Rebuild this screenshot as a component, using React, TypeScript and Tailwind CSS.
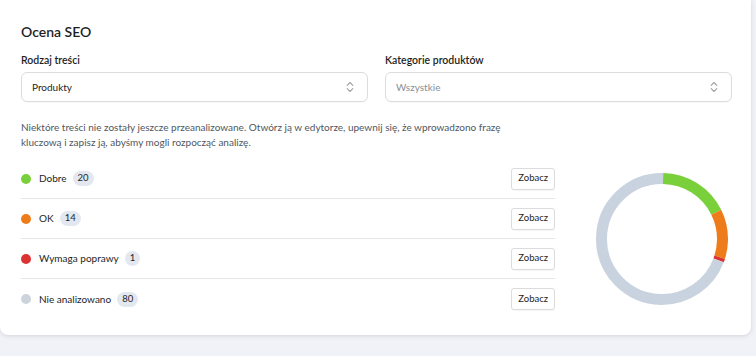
import React from 'react';

const rows = [
  { label: 'Dobre', count: 20, dot: 'bg-[#7ad03a]' },
  { label: 'OK', count: 14, dot: 'bg-[#ee7c1b]' },
  { label: 'Wymaga poprawy', count: 1, dot: 'bg-[#dc3232]' },
  { label: 'Nie analizowano', count: 80, dot: 'bg-[#cdd3dc]' },
];

const Donut: React.FC = () => {
  const total = rows.reduce((s, r) => s + r.count, 0);
  const colors = ['#7ad03a', '#ee7c1b', '#dc3232', '#c9d3e0'];
  const r = 60.5;
  const c = 2 * Math.PI * r;
  let offset = 0;
  return (
    <svg width="134" height="134" viewBox="0 0 134 134">
      <g transform="rotate(-89 67 67)">
        {rows.map((row, i) => {
          const len = (row.count / total) * c;
          const seg = (
            <circle
              key={row.label}
              cx="67"
              cy="67"
              r={r}
              fill="none"
              stroke={colors[i]}
              strokeWidth="11"
              strokeDasharray={`${len} ${c - len}`}
              strokeDashoffset={-offset}
            />
          );
          offset += len;
          return seg;
        })}
      </g>
    </svg>
  );
};

const UpDown = () => (
  <svg width="8" height="12" viewBox="0 0 8 12" fill="none" stroke="#9ea3a8" strokeWidth="1.1" strokeLinecap="round" strokeLinejoin="round">
    <path d="M1.2 4.3 4 1.5l2.8 2.8" />
    <path d="M1.2 7.7 4 10.5l2.8-2.8" />
  </svg>
);

const Select: React.FC<{ label: string; value: string; muted?: boolean }> = ({ label, value, muted }) => (
  <div className="flex flex-col">
    <span className="text-[10.5px] font-semibold text-[#1e1e1e] leading-[11px] mb-[6px]">{label}</span>
    <div className="h-[30px] rounded-md border border-[#dcdcde] flex items-center justify-between pl-[10px] pr-[13px] shadow-[0_1px_1px_rgba(0,0,0,0.03)]">
      <span className={`text-[10px] ${muted ? 'text-[#8c8f94]' : 'text-[#1e1e1e]'}`}>{value}</span>
      <UpDown />
    </div>
  </div>
);

export default function App() {
  return (
    <div className="w-[756px] h-[356px] bg-[#f0f2f7] overflow-hidden" style={{ fontFamily: 'Lato, "Noto Sans", sans-serif' }}>
      <div className="w-[751px] bg-white rounded-b-lg shadow-[0_1px_4px_rgba(0,0,0,0.12)] pl-[21px] pr-[19px] pt-[23px] pb-[16px]">
        <h2 className="text-[14px] font-semibold text-[#1e1e1e] leading-[18px]">Ocena SEO</h2>
        <div className="grid grid-cols-2 gap-[17px] mt-[14px]">
          <Select label="Rodzaj treści" value="Produkty" />
          <Select label="Kategorie produktów" value="Wszystkie" muted />
        </div>
        <p className="mt-[18px] text-[10px] leading-[15px] text-[#50575e] w-[510px]">
          Niektóre treści nie zostały jeszcze przeanalizowane. Otwórz ją w edytorze, upewnij się, że wprowadzono frazę kluczową i zapisz ją, abyśmy mogli rozpocząć analizę.
        </p>
        <div className="flex items-center mt-[9px]">
          <div className="w-[534px] flex flex-col">
            {rows.map((row, i) => (
              <div
                key={row.label}
                className={`h-[40px] flex items-center ${i < rows.length - 1 ? 'border-b border-[#e5e7eb]' : ''}`}
              >
                <span className={`w-[10px] h-[10px] rounded-full ${row.dot}`} />
                <span className="ml-[8px] text-[10px] text-[#1e1e1e]">{row.label}</span>
                <span className="ml-[6px] h-[15px] px-[5px] rounded-full bg-[#e3e8f0] text-[9.5px] text-[#1e1e1e] flex items-center">
                  {row.count}
                </span>
                <button className="ml-auto h-[22px] px-[6px] rounded-[3px] border border-[#dcdcde] bg-white text-[9.5px] text-[#1e1e1e] shadow-[0_1px_1px_rgba(0,0,0,0.04)]">
                  Zobacz
                </button>
              </div>
            ))}
          </div>
          <div className="ml-[40px]">
            <Donut />
          </div>
        </div>
      </div>
    </div>
  );
}
